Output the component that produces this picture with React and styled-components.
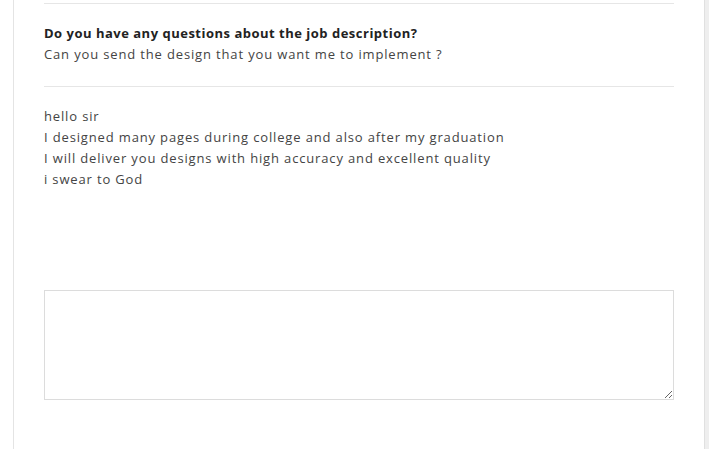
import React from "react";
import styled, { createGlobalStyle } from "styled-components";

const Global = createGlobalStyle`
  html, body { margin: 0; padding: 0; background: #ffffff; }
  body { font-family: "Open Sans", "Liberation Sans", sans-serif; }
`;

const Page = styled.div`
  width: 709px;
  height: 449px;
  display: flex;
  overflow: hidden;
  background: #ffffff;
`;

const Gutter = styled.div`
  width: 13px;
  flex: none;
`;

const Card = styled.div`
  width: 692px;
  flex: none;
  border-left: 1px solid #e4e4e4;
  border-right: 1px solid #e0e0e0;
  padding: 3px 30px 0 30px;
  box-sizing: border-box;
  background: #fff;
`;

const Side = styled.div`
  flex: 1;
  background: #eeeeee;
`;

const Section = styled.div`
  border-top: 1px solid #e6e6e6;
  padding: ${(p) => p.$pad};
`;

const Question = styled.div`
  font-size: 13px;
  font-weight: 700;
  color: #222;
  line-height: 21px;
  letter-spacing: 0.5px;
`;

const Text = styled.div`
  font-size: 13px;
  color: #444;
  line-height: 21px;
  letter-spacing: 0.85px;
`;

const Reply = styled.textarea`
  display: block;
  width: 630px;
  height: 110px;
  box-sizing: border-box;
  border: 1px solid #dcdcdc;
  outline: none;
  margin: 0;
  resize: vertical;
  font-family: inherit;
`;

export default function App() {
  return (
    <Page>
      <Global />
      <Gutter />
      <Card>
        <Section $pad="19px 0 21px">
          <Question>Do you have any questions about the job description?</Question>
          <Text>Can you send the design that you want me to implement ?</Text>
        </Section>
        <Section $pad="19px 0 100px">
          <Text>hello sir</Text>
          <Text>I designed many pages during college and also after my graduation</Text>
          <Text>I will deliver you designs with high accuracy and excellent quality</Text>
          <Text>i swear to God</Text>
        </Section>
        <Reply />
      </Card>
      <Side />
    </Page>
  );
}
